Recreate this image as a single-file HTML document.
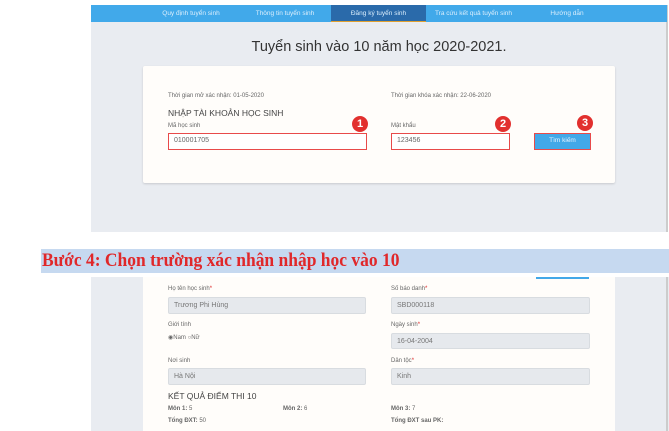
<!DOCTYPE html>
<html><head><meta charset="utf-8"><style>
*{margin:0;padding:0;box-sizing:border-box}
body{width:669px;height:431px;background:#fff;position:relative;overflow:hidden;font-family:"Liberation Sans",sans-serif;color:#555}
.a{position:absolute}
.nav{left:91px;top:5px;width:576px;height:17px;background:#41a9ea}
.tab{position:absolute;top:0;height:17px;line-height:17px;font-size:6.5px;color:#dbeefc;text-align:center}
.lbl{font-size:6px;color:#666}
.inp{background:#fff;border:1.5px solid #e84a4a;font-size:7px;color:#666;padding-left:5px;line-height:14px}
.ginp{background:#e6e9ed;border:1px solid #d8dce0;border-radius:2px;font-size:7px;color:#777;padding-left:5px;line-height:15px}
.b{width:16px;height:16px;border-radius:50%;background:#e2302e;color:#fff;font-weight:bold;font-size:11px;text-align:center;line-height:16px}
</style></head><body>
<div class="a" style="left:91px;top:5px;width:576px;height:227px;background:#e9ecf1"></div>
<div class="a" style="left:666px;top:5px;width:2px;height:227px;background:#ccc"></div>
<div class="a nav">
 <div class="tab" style="left:60px;width:80px">Quy định tuyển sinh</div>
 <div class="tab" style="left:154px;width:80px">Thông tin tuyển sinh</div>
 <div class="tab" style="left:240px;width:95px;background:#2a6aaa;border-bottom:1px solid #e0a030">Đăng ký tuyển sinh</div>
 <div class="tab" style="left:335px;width:95px">Tra cứu kết quả tuyển sinh</div>
 <div class="tab" style="left:436px;width:80px">Hướng dẫn</div>
</div>
<div class="a" style="left:91px;top:39px;width:576px;text-align:center;font-size:14.5px;color:#333">Tuyển sinh vào 10 năm học 2020-2021.</div>
<div class="a" style="left:143px;top:66px;width:472px;height:117px;background:#fffdfa;border-radius:2px;box-shadow:0 1px 2px rgba(0,0,0,.15)"></div>
<div class="a lbl" style="left:168px;top:93px">Thời gian mở xác nhận: 01-05-2020</div>
<div class="a lbl" style="left:391px;top:93px">Thời gian khóa xác nhận: 22-06-2020</div>
<div class="a" style="left:168px;top:108px;font-size:8.5px;color:#444">NHẬP TÀI KHOẢN HỌC SINH</div>
<div class="a lbl" style="left:168px;top:123px">Mã học sinh</div>
<div class="a lbl" style="left:391px;top:123px">Mật khẩu</div>
<div class="a inp" style="left:168px;top:133px;width:199px;height:17px">010001705</div>
<div class="a inp" style="left:391px;top:133px;width:119px;height:17px">123456</div>
<div class="a" style="left:534px;top:133px;width:57px;height:17px;border:1.5px solid #e84a4a;background:#42a8e8;color:#e8f4ff;font-size:6.5px;text-align:center;line-height:14px">Tìm kiếm</div>
<div class="a b" style="left:352px;top:116px">1</div>
<div class="a b" style="left:495px;top:116px">2</div>
<div class="a b" style="left:577px;top:115px">3</div>

<div class="a" style="left:41px;top:249px;width:628px;height:24px;background:#c6d9f0"></div>
<div class="a" style="left:42px;top:249px;font-family:'Liberation Serif',serif;font-weight:bold;font-size:19px;color:#e0282a;line-height:24px;transform:scaleX(0.92);transform-origin:left center;white-space:nowrap">Bước 4: Chọn trường xác nhận nhập học vào 10</div>

<div class="a" style="left:91px;top:277px;width:578px;height:154px;background:#e9ecf1"></div>
<div class="a" style="left:666px;top:277px;width:2px;height:154px;background:#ccc"></div>
<div class="a" style="left:143px;top:277px;width:472px;height:154px;background:#fffdfa"></div>
<div class="a" style="left:536px;top:277px;width:53px;height:2px;background:#42a8e8"></div>
<div class="a lbl" style="left:168px;top:286px">Họ tên học sinh<span style="color:#d22">*</span></div>
<div class="a lbl" style="left:391px;top:286px">Số báo danh<span style="color:#d22">*</span></div>
<div class="a ginp" style="left:168px;top:297px;width:198px;height:17px">Trương Phi Hùng</div>
<div class="a ginp" style="left:391px;top:297px;width:199px;height:17px">SBD000118</div>
<div class="a lbl" style="left:168px;top:322px">Giới tính</div>
<div class="a lbl" style="left:391px;top:322px">Ngày sinh<span style="color:#d22">*</span></div>
<div class="a lbl" style="left:168px;top:334px">◉Nam ○Nữ</div>
<div class="a ginp" style="left:391px;top:333px;width:199px;height:16px">16-04-2004</div>
<div class="a lbl" style="left:168px;top:358px">Nơi sinh</div>
<div class="a lbl" style="left:391px;top:358px">Dân tộc<span style="color:#d22">*</span></div>
<div class="a ginp" style="left:168px;top:368px;width:198px;height:17px">Hà Nội</div>
<div class="a ginp" style="left:391px;top:368px;width:199px;height:17px">Kinh</div>
<div class="a" style="left:168px;top:391px;font-size:8.5px;color:#444">KẾT QUẢ ĐIỂM THI 10</div>
<div class="a lbl" style="left:168px;top:406px"><b>Môn 1:</b> 5</div>
<div class="a lbl" style="left:283px;top:406px"><b>Môn 2:</b> 6</div>
<div class="a lbl" style="left:391px;top:406px"><b>Môn 3:</b> 7</div>
<div class="a lbl" style="left:168px;top:418px"><b>Tổng ĐXT:</b> 50</div>
<div class="a lbl" style="left:391px;top:418px"><b>Tổng ĐXT sau PK:</b></div>
</body></html>
